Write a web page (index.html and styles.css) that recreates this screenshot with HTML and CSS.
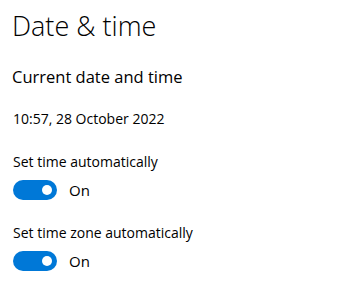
FILE: index.html
```html
<!DOCTYPE html>
<html lang="en">
<head>
    <meta charset="UTF-8">
    <meta name="viewport" content="width=device-width, initial-scale=1.0">
    <title>Date &amp; time</title>
    <link rel="stylesheet" href="styles.css">
</head>
<body>
    <div class="page">
        <h1>Date &amp; time</h1>
        <h2>Current date and time</h2>
        <p class="now">10:57, 28 October 2022</p>

        <div class="setting">
            <span class="label">Set time automatically</span>
            <div class="toggle-row">
                <span class="toggle on"><span class="knob"></span></span>
                <span class="state">On</span>
            </div>
        </div>

        <div class="setting">
            <span class="label">Set time zone automatically</span>
            <div class="toggle-row">
                <span class="toggle on"><span class="knob"></span></span>
                <span class="state">On</span>
            </div>
        </div>
    </div>
</body>
</html>
```

FILE: styles.css
```css
*{
    margin: 0px;
    padding: 0px;
    box-sizing: border-box;
}
body{
    background-color: #ffffff;
    color: #000000;
    font-family: "Segoe UI", "Open Sans", "Noto Sans", sans-serif;
}
.page{
    padding: 8px 12px 0 12px;
}
h1{
    font-size: 27px;
    font-weight: 300;
    line-height: 36px;
}
h2{
    margin-top: 20px;
    font-size: 16.5px;
    font-weight: 400;
    line-height: 26px;
}
.now{
    margin-top: 19px;
    margin-left: 1px;
    font-size: 14px;
    line-height: 20px;
}
.setting{
    margin-top: 23px;
    margin-left: 1px;
    display: flex;
    flex-direction: column;
    gap: 8px;
}
.setting + .setting{
    margin-top: 23px;
}
.label{
    font-size: 14px;
    line-height: 20px;
}
.toggle-row{
    display: flex;
    align-items: center;
    gap: 12px;
}
.toggle{
    position: relative;
    width: 44px;
    height: 20px;
    border-radius: 10px;
    background-color: #0078d7;
}
.knob{
    position: absolute;
    top: 5px;
    right: 5px;
    width: 10px;
    height: 10px;
    border-radius: 50%;
    background-color: #ffffff;
}
.state{
    font-size: 15px;
    line-height: 20px;
}
```
